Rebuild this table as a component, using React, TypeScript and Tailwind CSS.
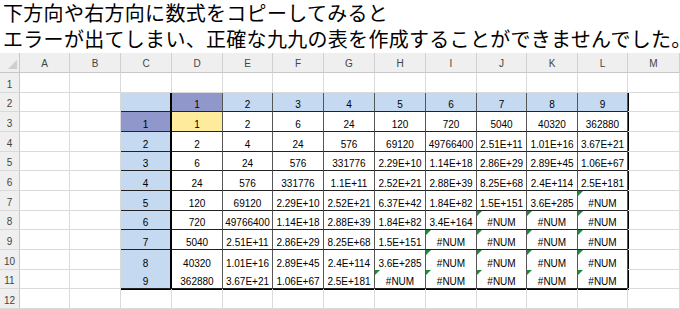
import React from "react";

const LETTERS = ["A", "B", "C", "D", "E", "F", "G", "H", "I", "J", "K", "L", "M"];

const TABLE: string[][] = [
  ["", "1", "2", "3", "4", "5", "6", "7", "8", "9"],
  ["1", "1", "2", "6", "24", "120", "720", "5040", "40320", "362880"],
  ["2", "2", "4", "24", "576", "69120", "49766400", "2.51E+11", "1.01E+16", "3.67E+21"],
  ["3", "6", "24", "576", "331776", "2.29E+10", "1.14E+18", "2.86E+29", "2.89E+45", "1.06E+67"],
  ["4", "24", "576", "331776", "1.1E+11", "2.52E+21", "2.88E+39", "8.25E+68", "2.4E+114", "2.5E+181"],
  ["5", "120", "69120", "2.29E+10", "2.52E+21", "6.37E+42", "1.84E+82", "1.5E+151", "3.6E+285", "#NUM"],
  ["6", "720", "49766400", "1.14E+18", "2.88E+39", "1.84E+82", "3.4E+164", "#NUM", "#NUM", "#NUM"],
  ["7", "5040", "2.51E+11", "2.86E+29", "8.25E+68", "1.5E+151", "#NUM", "#NUM", "#NUM", "#NUM"],
  ["8", "40320", "1.01E+16", "2.89E+45", "2.4E+114", "3.6E+285", "#NUM", "#NUM", "#NUM", "#NUM"],
  ["9", "362880", "3.67E+21", "1.06E+67", "2.5E+181", "#NUM", "#NUM", "#NUM", "#NUM", "#NUM"],
];

function cellBg(r: number, c: number) {
  if ((r === 0 && c === 1) || (r === 1 && c === 0)) return "bg-[#9098cb]";
  if (r === 1 && c === 1) return "bg-[#ffeb9c]";
  if (r === 0 || c === 0) return "bg-[#c5d9f1]";
  return "bg-white";
}

// green "error" corner on #NUM cells
function ErrorMark() {
  return (
    <svg className="absolute left-0 top-0" width="5" height="5" viewBox="0 0 5 5">
      <polygon points="0,0 5,0 0,5" fill="#1f8a3b" />
    </svg>
  );
}

function Table() {
  return (
    <div className="col-start-4 col-end-14 row-start-3 row-end-13 grid grid-cols-[51px_51px_50px_51px_51px_51px_51px_50px_51px_50px] grid-rows-[19px_20px_20px_19px_20px_20px_19px_20px_20px_19px] outline-2 outline-black -outline-offset-1">
      {TABLE.map((row, r) =>
        row.map((v, c) => (
          <div
            key={`${r}-${c}`}
            className={`relative flex items-end justify-center pb-[1px] leading-[10px] text-[10px] text-black ${cellBg(r, c)} ${
              c === 0 ? "border-r-2 border-r-black" : "border-r border-r-[#555]"
            } ${r === 8 ? "border-b-0" : "border-b border-b-[#222]"}`}
          >
            {v === "#NUM" && <ErrorMark />}
            {v}
          </div>
        ))
      )}
    </div>
  );
}

export default function App() {
  const sheetRows = Array.from({ length: 12 }, (_, i) => i + 1);

  return (
    <main className="w-[680px] h-[309px] overflow-hidden bg-white">
      <div className="h-[53px] pl-[3px] whitespace-nowrap font-['Noto_Sans_CJK_JP',sans-serif] text-[20px] leading-[26px] tracking-[0.3px] text-black">
        <p>下方向や右方向に数式をコピーしてみると</p>
        <p>エラーが出てしまい、正確な九九の表を作成することができませんでした。</p>
      </div>

      <div className="grid grid-cols-[20px_50px_51px_51px_51px_50px_51px_51px_51px_51px_50px_51px_50px_1fr] grid-rows-[20px_20px_19px_20px_20px_19px_20px_20px_19px_20px_20px_19px_20px] font-['Liberation_Sans',Arial,sans-serif]">
        <div className="relative bg-[#efefef] border-r border-b border-[#c8c8c8]">
          <svg className="absolute right-[2px] bottom-[3px]" width="9" height="9" viewBox="0 0 9 9">
            <polygon points="9,0 9,9 0,9" fill="#cfcfcf" />
          </svg>
        </div>
        {LETTERS.map((l) => (
          <div
            key={l}
            className="flex items-end justify-center pb-[3px] leading-[10px] text-[10px] text-[#444] bg-[#efefef] border-r border-r-[#d0d0d0] border-b border-b-[#c8c8c8]"
          >
            {l}
          </div>
        ))}

        <Table />

        {sheetRows.map((n) => (
          <React.Fragment key={n}>
            <div className="flex items-end justify-center pb-[2px] leading-[10px] text-[10px] text-[#444] bg-[#efefef] border-r border-r-[#c8c8c8] border-b border-b-[#d8d8d8]">
              {n}
            </div>
            {LETTERS.map((l, i) =>
              n >= 2 && n <= 11 && i >= 2 && i <= 11 ? null : (
                <div key={l} className="border-r border-b border-[#dadada]" />
              )
            )}
          </React.Fragment>
        ))}
      </div>
    </main>
  );
}
